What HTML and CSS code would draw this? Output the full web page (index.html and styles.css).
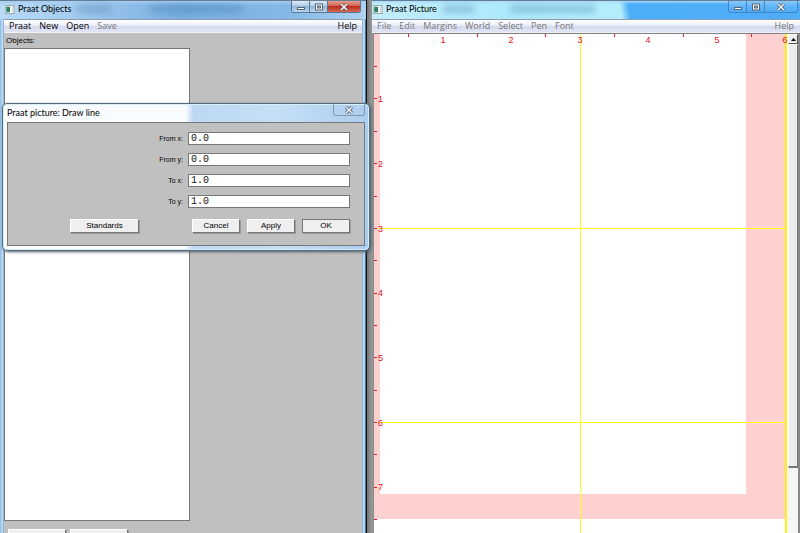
FILE: index.html
```
<!DOCTYPE html>
<html lang="en">
<head>
<meta charset="utf-8">
<title>Praat</title>
<link rel="stylesheet" href="styles.css">
</head>
<body>
<main class="desktop">
  <section class="window objects" aria-label="Praat Objects">
    <header class="titlebar">
      <svg class="app-icon" viewBox="0 0 10 10"><rect width="10" height="10" fill="#f4f7f5"/><path d="M0 .5h10M.5 0v10M9.500 0v10M0 9.500h10" stroke="#8a9da5"/><rect x="1" y="2" width="4" height="6" fill="#278060"/><path d="M7 3h2M7 5h2M7 7h2" stroke="#b8c4c8"/></svg>
      <h1>Praat Objects</h1>
      <span class="glass-text"></span>
      <div class="controls">
        <button type="button" aria-label="Minimize"><svg viewBox="0 0 10 8"><rect x="1.500" y="4.500" width="7" height="2" fill="#fff" stroke="#566577"/></svg></button>
        <button type="button" aria-label="Maximize"><svg viewBox="0 0 10 8"><rect x="1.500" y="1" width="7" height="6" fill="#fff" stroke="#566577"/><rect x="3.500" y="3" width="3" height="2" fill="#9fb4cc" stroke="#566577"/></svg></button>
        <button type="button" class="close" aria-label="Close"><svg viewBox="0 0 10 8"><path d="M2 1l6 6M8 1L2 7" stroke="#604050" stroke-width="3"/><path d="M2 1l6 6M8 1L2 7" stroke="#fff" stroke-width="1.600"/></svg></button>
      </div>
    </header>
    <nav class="menubar">
      <button type="button">Praat</button><button type="button">New</button><button type="button">Open</button><button type="button" disabled>Save</button><button type="button" class="help">Help</button>
    </nav>
    <div class="client">
      <h2>Objects:</h2>
      <div class="list" role="listbox" aria-label="Objects" tabindex="0"></div>
      <div class="list-actions"><button type="button" class="push" aria-label="Rename"></button><button type="button" class="push" aria-label="Copy"></button></div>
    </div>
  </section>

  <section class="window picture" aria-label="Praat Picture">
    <header class="titlebar">
      <svg class="app-icon" viewBox="0 0 10 10"><rect width="10" height="10" fill="#f4f7f5"/><path d="M0 .5h10M.5 0v10M9.500 0v10M0 9.500h10" stroke="#8a9da5"/><rect x="1" y="2" width="4" height="6" fill="#278060"/><path d="M7 3h2M7 5h2M7 7h2" stroke="#b8c4c8"/></svg>
      <h1>Praat Picture</h1>
      <span class="glass-text"></span>
      <div class="controls">
        <button type="button" aria-label="Minimize"><svg viewBox="0 0 10 8"><rect x="1.500" y="4.500" width="7" height="2" fill="#fff" stroke="#566577"/></svg></button>
        <button type="button" aria-label="Maximize"><svg viewBox="0 0 10 8"><rect x="1.500" y="1" width="7" height="6" fill="#fff" stroke="#566577"/><rect x="3.500" y="3" width="3" height="2" fill="#9fb4cc" stroke="#566577"/></svg></button>
        <button type="button" class="close" aria-label="Close"><svg viewBox="0 0 10 8"><path d="M2 1l6 6M8 1L2 7" stroke="#4d5c70" stroke-width="3"/><path d="M2 1l6 6M8 1L2 7" stroke="#fff" stroke-width="1.300"/></svg></button>
      </div>
    </header>
    <nav class="menubar">
      <button type="button">File</button><button type="button">Edit</button><button type="button">Margins</button><button type="button">World</button><button type="button">Select</button><button type="button">Pen</button><button type="button">Font</button><button type="button" class="help">Help</button>
    </nav>
    <div class="workspace">
      <div class="paper">
        <svg class="drawing" width="414" height="500" viewBox="0 0 414 500">
          <rect width="414" height="500" fill="#fff"/>
          <path d="M0 0H6V460H372V0H412V485H0Z" fill="#ffd0d0"/>
          <g fill="none" stroke="#ffff20"><path d="M206.500 0V500M5 194.500H412M5 388.500H412"/><path stroke="#fff010" stroke-width="2" d="M412 0V500"/></g>
          <path d="M34.500 0v3M103.500 0v3M171.500 0v3M240.500 0v3M309.500 0v3M377.500 0v3M0 32.500h3M0 64.500h3M0 97.500h3M0 129.500h3M0 162.500h3M0 194.500h3M0 226.500h3M0 259.500h3M0 291.500h3M0 323.500h3M0 356.500h3M0 388.500h3M0 420.500h3M0 453.500h3M0 485.500h3" fill="none" stroke="#e02030"/>
          <g class="ruler" text-anchor="middle"><text x="69" y="9">1</text><text x="137" y="9">2</text><text x="206" y="9">3</text><text x="274" y="9">4</text><text x="343" y="9">5</text><text x="411" y="9">6</text></g>
          <g class="ruler"><text x="4" y="68">1</text><text x="4" y="133">2</text><text x="4" y="198">3</text><text x="4" y="262">4</text><text x="4" y="327">5</text><text x="4" y="392">6</text><text x="4" y="456">7</text></g>
        </svg>
      </div>
      <div class="scrollbar"><button type="button" aria-label="Scroll up"><svg viewBox="0 0 7 5"><path d="M3.500 1L6 4H1z"/></svg></button><span class="thumb"></span></div>
    </div>
  </section>

  <form class="dialog" aria-label="Draw line">
    <header><h2>Praat picture: Draw line</h2><button type="button" class="dialog-close" aria-label="Close"><svg viewBox="0 0 10 8"><path d="M2 1l6 6M8 1L2 7" stroke="#4d5c70" stroke-width="3"/><path d="M2 1l6 6M8 1L2 7" stroke="#fff" stroke-width="1.300"/></svg></button></header>
    <div class="dialog-body">
      <div class="fields">
        <label for="fx">From x:</label><input id="fx" value="0.0">
        <label for="fy">From y:</label><input id="fy" value="0.0">
        <label for="tx">To x:</label><input id="tx" value="1.0">
        <label for="ty">To y:</label><input id="ty" value="1.0">
      </div>
      <footer><button type="button" class="push standards">Standards</button><button type="button" class="push">Cancel</button><button type="button" class="push">Apply</button><button type="submit" class="push default">OK</button></footer>
    </div>
  </form>
</main>
</body>
</html>
```
FILE: styles.css
```
* { box-sizing: border-box; }
body { margin: 0; font-family: "Open Sans", "Noto Sans", sans-serif; font-size: 9px; color: #000; }
h1, h2 { margin: 0; font-family: Lato, "Open Sans", sans-serif; font-size: 9px; font-weight: 400; }
button { margin: 0; padding: 0; border: 0; background: none; font: inherit; color: inherit; }
svg { display: block; }

.desktop { position: relative; display: grid; grid-template-columns: 367fr 433fr; height: 100vh; min-height: 300px; overflow: hidden; background: #888; }
.window { display: flex; flex-direction: column; min-width: 0; min-height: 0; }
.objects { padding: 0 5px 0 4px; background: linear-gradient(to right, #8ebbe3 0, #c5e2fb 3px, #6d8398 4px, #6d8398 calc(100% - 5px), #bfe0fc calc(100% - 4px), #9bcdf5 calc(100% - 2px), #111 calc(100% - 1px)); }
.picture { padding-left: 5px; background: linear-gradient(to right, #707477, #999 5px, #808080 8px); }

.titlebar { display: flex; align-items: flex-start; flex: none; height: 19px; border-top: 1px solid #657d94; }
.objects .titlebar { margin: 0 -4px; padding: 0 5px; background: linear-gradient(to bottom, #a7cdf0, transparent 4px), linear-gradient(to right, #b8daf6, #a4cbee 20%, #78aee0 50%, #87b9e6 80%, #afd3f1); }
.picture .titlebar { padding: 0 1px; background: linear-gradient(to bottom, #a8dcfa, transparent 3px), linear-gradient(80deg, #c4edfa 0%, #aee9fb 30%, #b4edfc 58%, #4caef8 60%, #50adf8 100%); }
.app-icon { flex: none; width: 10px; height: 9px; margin-top: 4px; }
.titlebar h1 { flex: none; margin: 2px 0 0 3px; line-height: 12px; }
.glass-text { flex: 1; height: 8px; margin: 4px 12px 0 6px; filter: blur(3px); opacity: .3; background: linear-gradient(to right, #3572a5 0 17%, transparent 17% 36%, #3572a5 36% 82%, transparent 82%); }
.picture .glass-text { margin-right: 100px; }
.controls { display: flex; height: 12px; border: 1px solid #597692; border-top: 0; border-radius: 0 0 3px 3px; overflow: hidden; }
.controls button { display: grid; place-items: center; width: 18px; border-right: 1px solid #597692; background: linear-gradient(#dce9f6, #b1cce6 45%, #91b6d9 50%, #bad6ee); }
.controls .close { width: 32px; border: 0; }
.controls svg { width: 10px; height: 8px; }
.objects .close { background: linear-gradient(#e79c90, #d06452 45%, #bc2c21 50%, #d66a50); }
.picture .controls { margin-right: 1px; border-color: #4286c4; }
.picture .controls button { border-color: #4286c4; background: linear-gradient(#8ac9fb, #62b6fa 45%, #4faaf5); }

.menubar { display: flex; flex: none; gap: 8px; height: 14px; padding: 0 5px; border-top: 1px solid #8b9db2; border-bottom: 1px solid #eef1fa; background: linear-gradient(#fff, #eceffa 45%, #d4daee 50%, #dfe4f4); }
.menubar button { line-height: 12px; }
.menubar button:disabled, .picture .menubar { color: #777; }
.menubar .help { margin-left: auto; }

.client { flex: 1; display: flex; flex-direction: column; min-height: 0; background: #c0c0c0; overflow: hidden; }
.client h2 { padding-left: 2px; font-family: "Liberation Sans", sans-serif; font-size: 8px; line-height: 15px; }
.list { flex: 1; width: 52%; border: 1px solid #777; background: #fff; }
.list-actions { display: flex; gap: 4px; height: 12px; padding: 8px 4px 0; overflow: hidden; }
.list-actions .push { width: 58px; }
.push { height: 14px; border: 1px solid; border-color: #fff #777 #777 #fff; background: #efefef; box-shadow: 1px 1px 0 #999; font-family: "Liberation Sans", sans-serif; font-size: 8px; line-height: 12px; }

.workspace { flex: 1; display: flex; min-height: 0; padding: 1px 0 0 2px; }
.picture .menubar { padding: 0 6px 0 5px; }
.paper { flex: 1; min-width: 0; overflow: hidden; background: #fff; }
.ruler { font-family: "Liberation Sans", sans-serif; font-size: 9px; fill: #e01020; }
.scrollbar { flex: none; display: flex; flex-direction: column; width: 12px; border-right: 2px solid #888; background: #f5f5f5; }
.scrollbar button { display: grid; place-items: center; height: 10px; border: 1px solid; border-color: #fff #555 #555 #fff; background: #eee; }
.scrollbar svg { width: 7px; height: 5px; }
.thumb { height: 85%; border: 1px solid; border-color: #fff #777 #777 #fff; border-bottom-width: 2px; background: #ececec; }

.dialog { position: absolute; left: 2px; top: 103px; width: 46%; padding: 0 4px 4px; border: 1px solid #526d80; border-radius: 5px; background: linear-gradient(to right, #f9fcff 0 50%, #bdd8f3 52%, #c5dff6 75%, #abcdef); box-shadow: inset 0 0 0 1px #d8effb, 1px 1px 3px #4b5b69; }
.dialog header { display: flex; justify-content: space-between; height: 18px; }
.dialog header h2 { padding-top: 3px; line-height: 12px; }
.dialog-close { display: grid; place-items: center; width: 32px; height: 12px; border: 1px solid #8398ad; border-top: 0; border-radius: 0 0 3px 3px; }
.dialog-close svg { width: 10px; height: 8px; }
.dialog-body { padding: 9px 14px 12px; border: 1px solid #777; background: #c0c0c0; }
.fields { display: grid; grid-template-columns: 1fr 162px; gap: 8px 5px; align-items: center; }
.fields label { text-align: right; font-family: "Liberation Sans", sans-serif; font-size: 7px; line-height: 13px; }
.fields input { width: 100%; min-width: 0; height: 13px; padding: 0 2px; border: 1px solid #777; border-radius: 0; background: #fff; font: 10px/11px "Liberation Mono", monospace; color: #111; }
.dialog footer { display: flex; gap: 7px; margin-top: 11px; }
.dialog footer .push { width: 48px; }
.dialog footer .standards { width: 69px; margin-left: 48px; margin-right: auto; }
.dialog footer .default { border-color: #777; }
```
